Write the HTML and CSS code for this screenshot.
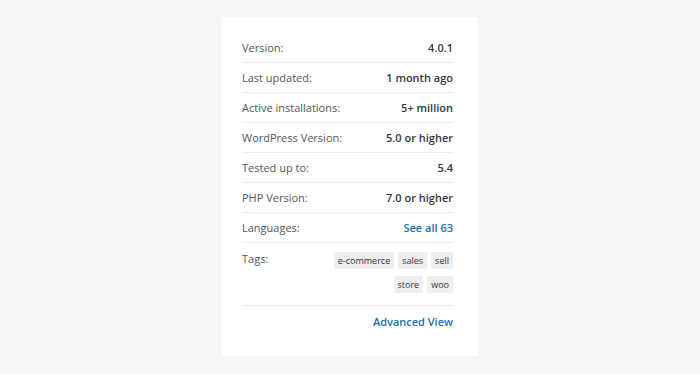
FILE: index.html
```html
<!DOCTYPE html>
<html lang="en">
<head>
  <meta charset="UTF-8" />
  <meta name="viewport" content="width=device-width, initial-scale=1.0"/>
  <title>Plugin Meta</title>
  <link rel="stylesheet" href="styles.css">
</head>
<body>

  <div class="meta-card">
    <ul class="meta-list">
      <li class="meta-row"><span class="meta-label">Version:</span><strong>4.0.1</strong></li>
      <li class="meta-row"><span class="meta-label">Last updated:</span><strong>1 month ago</strong></li>
      <li class="meta-row"><span class="meta-label">Active installations:</span><strong>5+ million</strong></li>
      <li class="meta-row"><span class="meta-label">WordPress Version:</span><strong>5.0 or higher</strong></li>
      <li class="meta-row"><span class="meta-label">Tested up to:</span><strong>5.4</strong></li>
      <li class="meta-row"><span class="meta-label">PHP Version:</span><strong>7.0 or higher</strong></li>
      <li class="meta-row"><span class="meta-label">Languages:</span><a href="#" class="meta-link">See all 63</a></li>
      <li class="meta-row tags-row">
        <span class="meta-label">Tags:</span>
        <div class="tags">
          <a href="#">e-commerce</a>
          <a href="#">sales</a>
          <a href="#">sell</a>
          <a href="#">store</a>
          <a href="#">woo</a>
        </div>
      </li>
    </ul>
    <div class="meta-footer"><a href="#" class="meta-link">Advanced View</a></div>
  </div>

</body>
</html>
```

FILE: styles.css
```css
:root {
  --page-bg: #f6f6f6;
  --line: #eeeeee;
  --label: #50575e;
  --value: #32373c;
  --link: #2271b1;
}

body {
  margin: 0;
  background: var(--page-bg);
  font-family: 'Open Sans', sans-serif;
  font-size: 11px;
  line-height: 15px;
}

.meta-card {
  width: 256px;
  box-sizing: border-box;
  margin: 17px auto 0;
  padding: 16px 25px 27px 20px;
  background: #fff;
}

.meta-list {
  list-style: none;
  margin: 0;
  padding: 0;
}

.meta-row {
  display: flex;
  justify-content: space-between;
  align-items: flex-start;
  padding: 7px 0;
  border-bottom: 1px solid var(--line);
}

.meta-label {
  color: var(--label);
}

.meta-row strong {
  color: var(--value);
  font-weight: 600;
}

.meta-link {
  color: var(--link);
  font-weight: 600;
  text-decoration: none;
}

.tags-row {
  padding: 8px 0 12px;
}

.tags {
  display: flex;
  flex-wrap: wrap;
  justify-content: flex-end;
  gap: 7px 4px;
  width: 124px;
  margin-top: 1px;
}

.tags a {
  display: block;
  padding: 0 4px;
  line-height: 17px;
  font-size: 9px;
  color: var(--value);
  background: #eeeeee;
  text-decoration: none;
  border-radius: 2px;
}

.meta-footer {
  text-align: right;
  padding-top: 8px;
}
```
